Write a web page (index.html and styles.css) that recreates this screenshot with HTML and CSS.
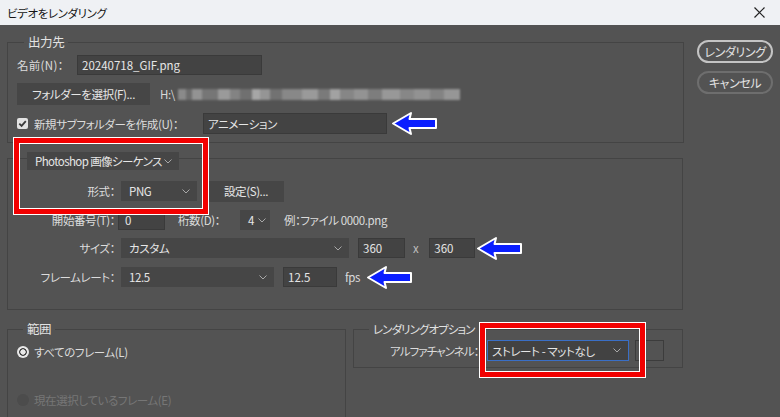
FILE: index.html
```html
<!DOCTYPE html>
<html lang="ja">
<head>
<meta charset="utf-8">
<title>ビデオをレンダリング</title>
<link rel="stylesheet" href="styles.css">
</head>
<body>
<div class="titlebar">
  <span class="title">ビデオをレンダリング</span>
  <svg class="close" width="11" height="11" viewBox="0 0 11 11"><path d="M0.5 0.5 L10.5 10.5 M10.5 0.5 L0.5 10.5" stroke="#222" stroke-width="1.2" fill="none"/></svg>
</div>
<div class="main">
  <div class="content">
    <fieldset class="group g-out">
      <legend class="lg">出力先</legend>
      <div class="row r1">
        <span class="lbl-name">名前(N)：</span>
        <div class="field f-name">20240718_GIF.png</div>
      </div>
      <div class="row r2">
        <div class="btn b-folder">フォルダーを選択(F)...</div>
        <span class="path">H:\</span>
        <div class="blur"></div>
      </div>
      <div class="row r3">
        <span class="check"><svg width="11" height="11" viewBox="0 0 11 11"><path d="M2.3 5.6 L4.6 7.9 L8.8 3.2" stroke="#3a3a3a" stroke-width="1.8" fill="none"/></svg></span>
        <span class="lbl-sub">新規サブフォルダーを作成(U)：</span>
        <div class="field f-sub">アニメーション</div>
      </div>
    </fieldset>

    <fieldset class="group g-fmt">
      <legend class="lg-sel">
        <div class="select s-type"><span>Photoshop 画像シーケンス</span><svg class="chev" width="8" height="5" viewBox="0 0 8 5"><polyline points="0.5,0.5 4,4 7.5,0.5" fill="none" stroke="#a8a8a8" stroke-width="1"/></svg></div>
      </legend>
      <div class="row rf">
        <span class="lbl">形式：</span>
        <div class="select s-png"><span>PNG</span><svg class="chev" width="8" height="5" viewBox="0 0 8 5"><polyline points="0.5,0.5 4,4 7.5,0.5" fill="none" stroke="#a8a8a8" stroke-width="1"/></svg></div>
        <div class="btn b-set">設定(S)...</div>
      </div>
      <div class="row rs">
        <span class="lbl lbl-start">開始番号(T)：</span>
        <div class="field f-start">0</div>
        <span class="lbl-digit">桁数(D)：</span>
        <div class="select s-digit"><span>4</span><svg class="chev" width="8" height="5" viewBox="0 0 8 5"><polyline points="0.5,0.5 4,4 7.5,0.5" fill="none" stroke="#a8a8a8" stroke-width="1"/></svg></div>
        <span class="example">例：ファイル 0000.png</span>
      </div>
      <div class="row rz">
        <span class="lbl">サイズ：</span>
        <div class="select s-size"><span>カスタム</span><svg class="chev" width="8" height="5" viewBox="0 0 8 5"><polyline points="0.5,0.5 4,4 7.5,0.5" fill="none" stroke="#a8a8a8" stroke-width="1"/></svg></div>
        <div class="field f-w">360</div>
        <span class="times">x</span>
        <div class="field f-h">360</div>
      </div>
      <div class="row rr">
        <span class="lbl">フレームレート：</span>
        <div class="select s-fps"><span>12.5</span><svg class="chev" width="8" height="5" viewBox="0 0 8 5"><polyline points="0.5,0.5 4,4 7.5,0.5" fill="none" stroke="#a8a8a8" stroke-width="1"/></svg></div>
        <div class="field f-fps">12.5</div>
        <span class="fps">fps</span>
      </div>
    </fieldset>

    <div class="bottom">
      <fieldset class="group g-range">
        <legend class="lg lg-range">範囲</legend>
        <div class="row rad1"><span class="radio"></span><span>すべてのフレーム(L)</span></div>
        <div class="row rad2 disabled"><span class="radio off"></span><span>現在選択しているフレーム(E)</span></div>
      </fieldset>
      <fieldset class="group g-opt">
        <legend class="lg lg-opt">レンダリングオプション</legend>
        <div class="row ra">
          <span class="lbl-alpha">アルファチャンネル：</span>
          <div class="select s-alpha"><span>ストレート - マットなし</span><svg class="chev" width="8" height="5" viewBox="0 0 8 5"><polyline points="0.5,0.5 4,4 7.5,0.5" fill="none" stroke="#a8a8a8" stroke-width="1"/></svg></div>
          <div class="swatch"></div>
        </div>
      </fieldset>
    </div>
  </div>
  <div class="side">
    <div class="pill primary">レンダリング</div>
    <div class="pill">キャンセル</div>
  </div>
</div>

<div class="hl hl1"></div>
<div class="hl hl2"></div>
<svg class="arrow a1" width="47" height="25" viewBox="0 0 47 25"><polygon points="2,12.5 20,2 18.5,8 45,8 45,17 18.5,17 20,23" fill="#0a1eff" stroke="#fff" stroke-width="2" stroke-linejoin="round"/></svg>
<svg class="arrow a2" width="47" height="25" viewBox="0 0 47 25"><polygon points="2,12.5 20,2 18.5,8 45,8 45,17 18.5,17 20,23" fill="#0a1eff" stroke="#fff" stroke-width="2" stroke-linejoin="round"/></svg>
<svg class="arrow a3" width="47" height="25" viewBox="0 0 47 25"><polygon points="2,12.5 20,2 18.5,8 45,8 45,17 18.5,17 20,23" fill="#0a1eff" stroke="#fff" stroke-width="2" stroke-linejoin="round"/></svg>
</body>
</html>
```
FILE: styles.css
```css
html, body {
  margin: 0;
  padding: 0;
}
body {
  width: 780px;
  height: 417px;
  overflow: hidden;
  position: relative;
  background: #535353;
  color: #dcdcdc;
  font-family: "Noto Sans CJK JP", "Noto Sans", sans-serif;
  font-size: 11.5px;
  line-height: 16px;
  letter-spacing: -0.4px;
  font-feature-settings: "palt";
}
.titlebar {
  height: 25px;
  box-sizing: border-box;
  background: #eff1f4;
  display: flex;
  align-items: center;
  justify-content: space-between;
  padding: 0 15px 0 7px;
  color: #151515;
}
.title { font-size: 11.5px; }
.main {
  display: flex;
  height: 392px;
}
.content {
  width: 690px;
  padding-left: 7px;
  box-sizing: border-box;
}
.side {
  padding: 15px 0 0 7px;
  display: flex;
  flex-direction: column;
  gap: 8px;
}
.pill {
  width: 76px;
  height: 23px;
  box-sizing: border-box;
  border: 2px solid #6e6e6e;
  border-radius: 12px;
  display: flex;
  align-items: center;
  justify-content: center;
  color: #e2e2e2;
  font-size: 12px;
}
.pill.primary { border-color: #c4c4c4; }

.group {
  margin: 0;
  border: 1px solid #444444;
  box-sizing: border-box;
  min-width: 0;
}
.lg {
  margin-left: 7px;
  padding: 0 4px;
  font-size: 12.5px;
  line-height: 16px;
  color: #e2e2e2;
  white-space: nowrap;
}
.row {
  display: flex;
  align-items: center;
  white-space: nowrap;
}
.field {
  background: #434343;
  border: 1px solid #3a3a3a;
  box-sizing: border-box;
  height: 20px;
  padding: 0 4px;
  display: flex;
  align-items: center;
  color: #e6e6e6;
  white-space: nowrap;
  letter-spacing: 0;
}
.select {
  background: #464646;
  box-sizing: border-box;
  height: 20px;
  padding: 0 7px 0 8px;
  display: flex;
  align-items: center;
  justify-content: space-between;
  color: #e6e6e6;
  white-space: nowrap;
}
.select span { white-space: nowrap; }
.chev { flex: none; }
.btn {
  background: #464646;
  display: flex;
  align-items: center;
  justify-content: center;
  box-sizing: border-box;
  color: #e6e6e6;
  white-space: nowrap;
}

/* output group */
.g-out {
  width: 677px;
  margin-top: 9px;
  padding: 5px 9px 8px 9px;
}
.r1 { height: 20px; }
.lbl-name { width: 60px; letter-spacing: 0.3px; }
.f-name { width: 185px; }
.r2 { height: 22px; margin-top: 8px; }
.b-folder { width: 133px; height: 22px; }
.path { margin-left: 10px; color: #d8d8d8; }
.blur {
  margin-left: 3px;
  width: 282px;
  height: 11px;
  filter: blur(0.8px);
  background:
    linear-gradient(to right,
      #8a8a8a 0 8px, #6d6d6d 8px 14px, #939393 14px 24px, #767676 24px 40px,
      #9a9a9a 40px 52px, #838383 52px 62px, #707070 62px 74px, #a6a6a6 74px 82px,
      #959595 82px 92px, #727272 92px 104px, #888888 104px 124px, #9a9a9a 124px 140px,
      #7a7a7a 140px 152px, #a2a2a2 152px 162px, #868686 162px 176px, #939393 176px 190px,
      #7d7d7d 190px 204px, #989898 204px 222px, #878787 222px 236px, #929292 236px 252px,
      #838383 252px 266px, #969696 266px 282px);
}
.r3 { height: 21px; margin-top: 8px; }
.check {
  width: 11px;
  height: 11px;
  background: #e2e2e2;
  border-radius: 2px;
  margin-right: 6px;
  display: flex;
}
.lbl-sub { width: 169px; }
.f-sub { width: 184px; height: 21px; letter-spacing: -0.4px; }

/* format group */
.g-fmt {
  width: 676px;
  margin-top: 4px;
  padding: 11px 9px 22px 9px;
}
.lg-sel {
  margin-left: 10px;
  padding: 5px 0 0 0;
}
.s-type { width: 152px; height: 18px; letter-spacing: -0.6px; }
.lbl {
  width: 98px;
  text-align: right;
  margin-right: 6px;
}
.lbl-start { margin-right: 3px; }
.rf { height: 20px; }
.s-png { width: 76px; }
.b-set { width: 76px; height: 21px; margin-left: 11px; }
.rs { height: 20px; margin-top: 9px; }
.f-start { width: 47px; padding-left: 6px; }
.lbl-digit { margin-left: 13px; width: 62px; }
.s-digit { width: 30px; padding: 0 4px 0 8px; }
.example { margin-left: 14px; }
.rz { height: 20px; margin-top: 8px; }
.s-size { width: 228px; }
.f-w { width: 47px; margin-left: 9px; }
.times { margin: 0 11px 0 8px; color: #bdbdbd; }
.f-h { width: 46px; }
.rr { height: 20px; margin-top: 9px; }
.s-fps { width: 153px; }
.f-fps { width: 54px; margin-left: 9px; }
.fps { margin-left: 8px; }

/* bottom groups */
.bottom {
  display: flex;
  gap: 7px;
  margin-top: 11px;
  align-items: flex-start;
}
.g-range {
  width: 339px;
  height: 110px;
  padding: 7px 9px;
}
.lg-range { margin-left: 6px; }
.rad1 { height: 16px; }
.rad2 { height: 16px; margin-top: 32px; }
.radio {
  width: 12px;
  height: 12px;
  border-radius: 50%;
  margin-right: 5px;
  background: radial-gradient(circle, #e8e8e8 0 2.4px, #4a4a4a 2.9px 3.6px, #e8e8e8 4.1px);
}
.radio.off { background: #4c4c4c; }
.disabled { color: #767676; }
.g-opt {
  width: 330px;
  padding: 3px 9px 6px 15px;
}
.lg-opt { margin-left: 0; font-size: 11.5px; letter-spacing: -0.9px; }
.ra { height: 21px; margin-left: 21px; }
.lbl-alpha { width: 97px; letter-spacing: -0.9px; }
.s-alpha {
  width: 142px;
  height: 21px;
  border: 1px solid #3a6fc6;
  background: #424242;
  padding-left: 4px;
}
.swatch {
  width: 29px;
  height: 21px;
  margin-left: 6px;
  border: 1px solid #3c3c3c;
  box-sizing: border-box;
}

/* annotation overlays */
.hl {
  position: absolute;
  box-sizing: border-box;
  border: 5px solid #f20000;
  outline: 1px solid #ffffff;
  box-shadow: inset 0 0 0 1px #ffffff;
}
.hl1 { left: 14px; top: 138px; width: 194px; height: 76px; }
.hl2 { left: 480px; top: 323px; width: 165px; height: 54px; }
.arrow { position: absolute; }
.a1 { left: 391px; top: 111px; }
.a2 { left: 476px; top: 236px; }
.a3 { left: 366px; top: 265px; }
```
